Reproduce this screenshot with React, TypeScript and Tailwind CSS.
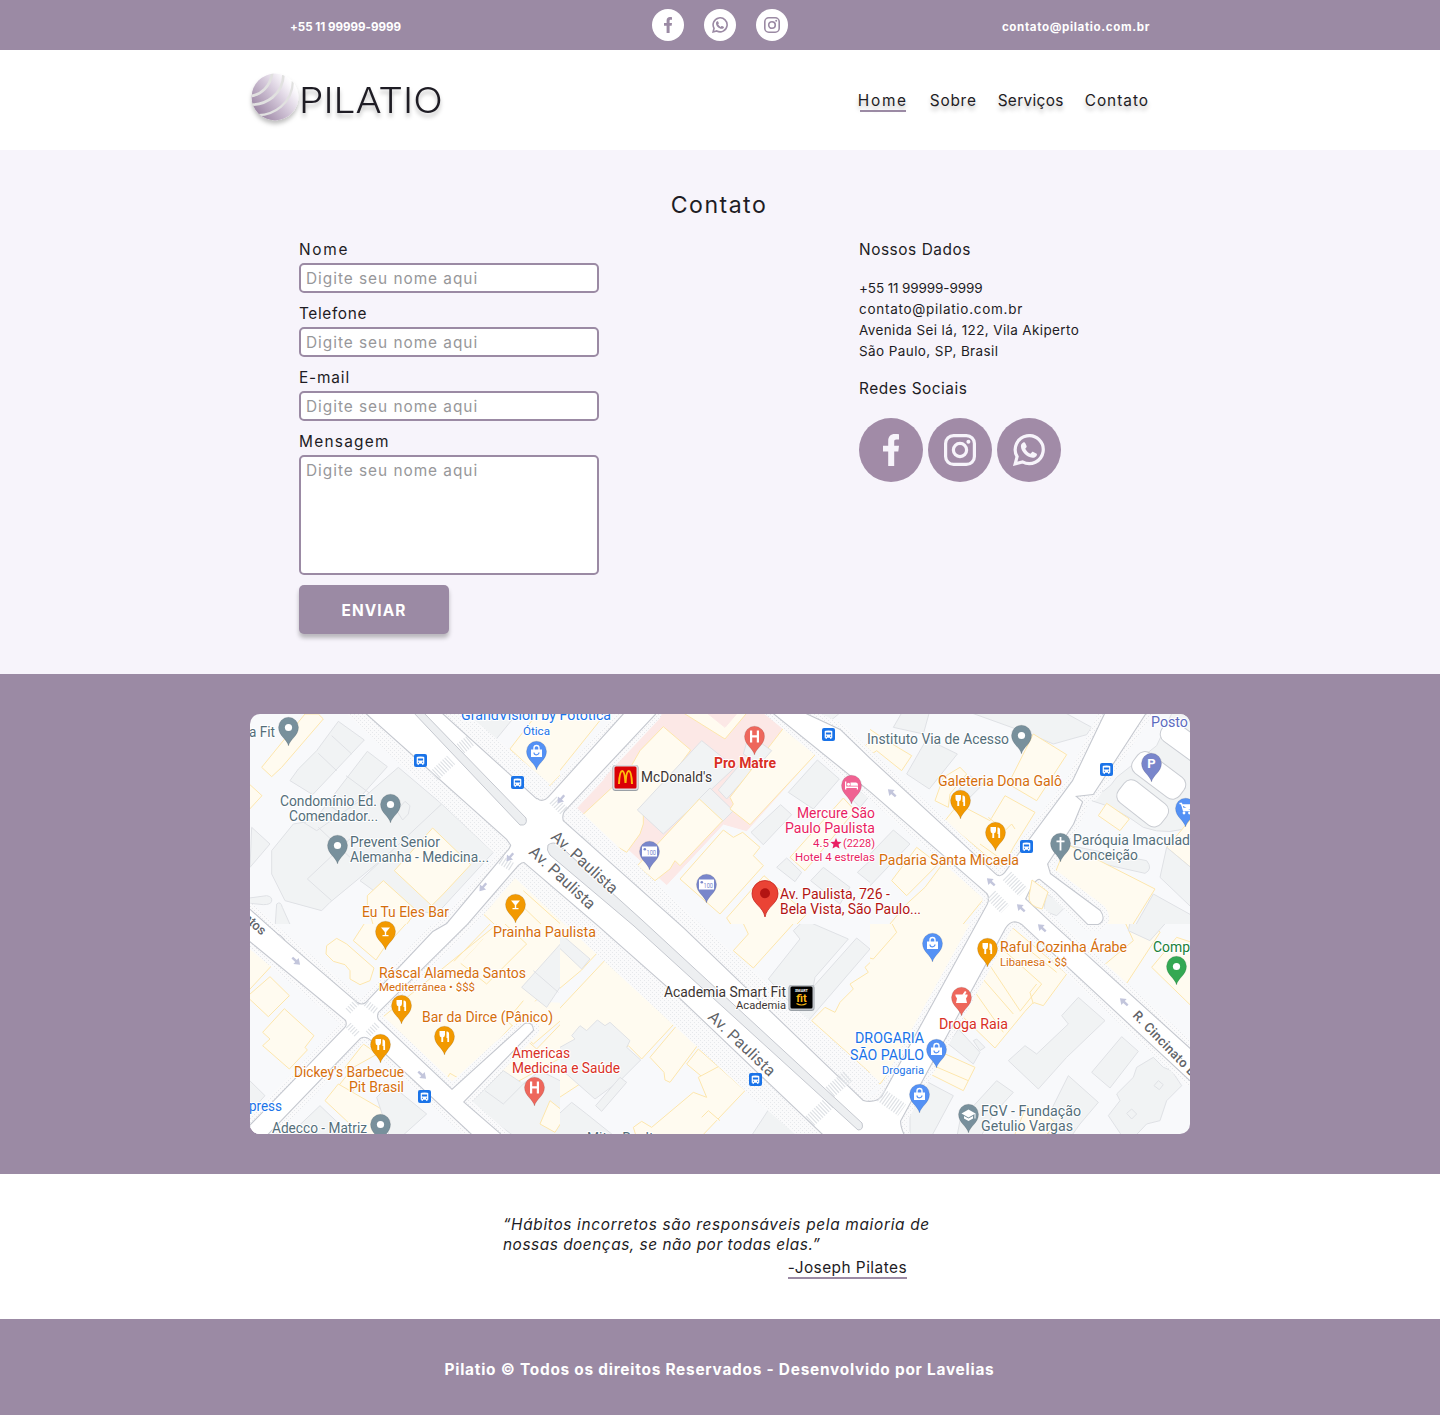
import type { ReactNode } from 'react';

/* ---------- social icons ---------- */

function FacebookIcon({ className }: { className: string }) {
  return (
    <svg viewBox="0 0 32 32" className={className} fill="currentColor">
      <path d="M24 .3V5.6h-2.6c-1.7 0-2.2.8-2.2 2.2V11.8H24l-.7 5.8h-4.1V32h-6V17.6H8v-5.8h5.2V7C13.200 2.600 15.800.1 19.700.1c1.800 0 3.300.1 4.300.2z" />
    </svg>
  );
}

function InstagramIcon({ className }: { className: string }) {
  return (
    <svg viewBox="0 0 32 32" className={className} fill="none" stroke="currentColor" strokeWidth="3.200">
      <rect x="1.600" y="1.600" width="28.800" height="28.800" rx="8" />
      <circle cx="16" cy="16" r="6.600" />
      <circle cx="24.400" cy="7.700" r="2" fill="currentColor" stroke="none" />
    </svg>
  );
}

function WhatsappIcon({ className }: { className: string }) {
  return (
    <svg viewBox="0 0 32 32" className={className}>
      <path
        d="M2.200 29.800 4.100 22.600A14 14 0 1 1 9.500 27.900Z"
        fill="none"
        stroke="currentColor"
        strokeWidth="3.200"
      />
      <path
        d="M10.200 8.600c.7-.5 1.600-.5 2 .3l1.400 3.100c.2.500.1 1-.3 1.400l-1.100 1.300c1.200 2.300 2.900 4 5.300 5.100l1.400-1.600c.4-.4.9-.6 1.400-.3l3 1.600c.6.3.8.8.6 1.400-.6 2-2.400 2.900-4.400 2.800-6-.6-11.400-5.900-11.600-11.400 0-1.600.9-2.900 2.300-3.700z"
        fill="currentColor"
      />
    </svg>
  );
}

function LogoBall() {
  return (
    <svg viewBox="0 0 54 62" className="h-[62px] w-[54px] shrink-0 overflow-visible">
      <defs>
        <linearGradient id="ball" x1="0.120" y1="0.850" x2="0.900" y2="0.220">
          <stop offset="0" stopColor="#9c86a4" />
          <stop offset="0.500" stopColor="#cfc2d5" />
          <stop offset="0.900" stopColor="#f8f5fa" />
          <stop offset="1" stopColor="#ffffff" />
        </linearGradient>
        <clipPath id="ballClip">
          <circle cx="25" cy="28" r="23.400" />
        </clipPath>
        <filter id="ballShadow" x="-20%" y="-20%" width="140%" height="150%">
          <feDropShadow dx="0" dy="3.500" stdDeviation="2" floodColor="#000" floodOpacity="0.250" />
        </filter>
      </defs>
      <g filter="url(#ballShadow)">
        <circle cx="25" cy="28" r="23.400" fill="url(#ball)" />
      </g>
      <g clipPath="url(#ballClip)" fill="none" stroke="#e1e1e0" strokeWidth="2.700">
        <path d="M0 27.200C11 26 20.500 18 22.700 2" />
        <path d="M0 35.800C16 36 33 26 33.500 5" />
        <path d="M6 46C24 47 42.500 34 42.900 12" strokeWidth="2.300" />
      </g>
    </svg>
  );
}

/* ---------- map ---------- */

const Y = 'fill-[#fffbf0] stroke-[#fde6ac]';
const G = 'fill-[#f1f3f4] stroke-[#dfe1e5]';
const P = 'fill-[#fce8e6] stroke-[#fce8e6]';

type Shape = [string, string];

/* Each tile is a piece of the map, drawn on a grid three times finer than the page. */
const tiles: { x: number; y: number; w: number; shapes: Shape[] }[] = [
  {
    x: 0,
    y: 0,
    w: 930,
    shapes: [
      [Y, 'M165 0 35 160 65 188 95 160 220 15 205 0Z'],
      [Y, 'M-9 204 36 245-9 294Z'],
      [G, 'M265 22 343 78 188 242 120 200 145 165 200 110Z'],
      [G, 'M245 65 305 120M205 118 260 170'],
      [G, 'M352 112 412 158 330 250 180 400 130 340 200 310Z'],
      [G, 'M288 185 362 240M225 265 290 310'],
      [G, 'M445 160 575 270 475 375 440 400 240 565 215 590 105 560 65 480 65 410 130 330 160 325 200 350 330 260Z'],
      [G, 'M172 495 310 365 355 400M172 495 245 560M205 340 300 430'],
      [G, 'M440 290 465 262 480 275 475 300 458 318Z'],
      [G, 'M5 340 60 390 0 460Z'],
      [G, 'M575 270 730 415 560 600 440 580 330 500Z'],
      [Y, 'M548 342 662 452 580 540 545 575 433 470Z'],
      [Y, 'M400 500 500 590 462 642H372L352 570 352 545Z'],
      [G, 'M-9 553 50 545Q68 548 65 562 62 572 40 572L-9 567Z'],
      [G, 'M75 642 80 570Q92 560 97 580L125 642Z'],
      [G, 'M630-12 735 80 810-12Z'],
      [Y, 'M870-12 780 105 900 215 990 120V-12Z'],
      [Y, 'M815 465 990 630V642H745L700 600Z'],
      [Y, 'M820 530 945 642M800 560 885 642'],
    ],
  },
  {
    x: 0,
    y: 210,
    w: 930,
    shapes: [
      [Y, 'M-9 60 65 125-9 205Z'],
      [Y, 'M60 158 118 215 55 278-9 218Z'],
      [Y, 'M103 254 192 335 165 370 172 378 118 435 38 365 60 345 38 325Z'],
      [Y, 'M230 65 260 43 290 60 372 132 360 170 330 182 300 165V140L285 122 250 112 228 90Z'],
      [Y, 'M350-12 310 50 378 108 400 75 478-12Z'],
      [Y, 'M757-12 385 290 590 465 620 480 990 90V-12Z'],
      [Y, 'M640 110 700 45 775 105 712 172Z'],
      [Y, 'M612 112 732-12M632 118 710 180 830 60 752-12'],
      [Y, 'M590 465 600 448 630 465M820 230 770 290 850 360 990 240'],
      [G, 'M990 20V100L890 250 815 190 940 50Z'],
      [G, 'M850 140 925 205'],
      [Y, 'M720 440 820 340 860 375 990 240V370L790 480Z'],
      [G, 'M660 540 760 440 820 480 870 440 990 500V642H800Z'],
      [G, 'M705 500 760 540 830 470'],
      [Y, 'M900 530 950 570 915 625 870 600Z'],
      [Y, 'M340 360 285 430 330 470 270 560 230 530 310 430 400 380 440 430Z'],
      [Y, 'M265 480 225 530 345 642H400L420 570Z'],
      [G, 'M380 520 420 480 530 570 450 642H420Z'],
      [G, 'M210 545 312 642H108Z'],
      [G, 'M-9 462 45 515-9 575Z'],
    ],
  },
  {
    x: 310,
    y: 0,
    w: 930,
    shapes: [
      [Y, 'M-9-12H145L-9 180Z'],
      [P, 'M290-12H640L770 115 560 350 490 330 320 512 210 410 50 285 130 200 220 60Z'],
      [Y, 'M310 38 392 108 250 300 250 330 240 360 200 415 150 385 120 350 65 305 200 180 240 110Z'],
      [G, 'M425 80 525 160 310 360 232 288Z'],
      [Y, 'M356-12 495 75 568-12Z'],
      [P, 'M430-12 495 40 540-12Z'],
      [G, 'M450 222 520 290 485 325 412 260Z'],
      [G, 'M545 145 575 170 500 255 475 228Z'],
      [Y, 'M680 30 772 115 570 332 510 285 520 270 510 250Z'],
      [G, 'M560 85 580 70 635 110 600 150 550 120Z'],
      [Y, 'M418 255 488 320 360 455 345 440 330 465 285 500 232 455Z'],
      [Y, 'M490 348 520 370 548 355 600 400 580 425 610 455 480 600 360 495Z'],
      [Y, 'M612 485 740 600 700 642H520L500 612Z'],
      [G, 'M772 138 838 195 760 285 685 235Z'],
      [G, 'M662 272 695 302 610 392 573 355Z'],
      [Y, 'M850 252 885 290 735 470 690 430Z'],
      [G, 'M890 225 925 250 900 280 870 250Z'],
      [G, 'M680 432 725 475 705 503 650 460Z'],
      [G, 'M790 460 870 520 840 570 752 500Z'],
      [G, 'M980 395 892 475 980 545Z'],
      [G, 'M60 375 80 350 105 370 85 400Z'],
      [G, 'M750-12H850L800 30Z'],
      [Y, 'M980 35 900 110 980 155Z'],
      [Y, 'M-9 562 45 610 30 642H-9Z'],
    ],
  },
  {
    x: 310,
    y: 210,
    w: 930,
    shapes: [
      [Y, 'M-9-12H5L118 80 90 110 65 138-9 200Z'],
      [G, 'M-9 20 90 105 65 135-9 65Z'],
      [Y, 'M145 98 353 288 245 405 205 365 60 480-9 525V262Z'],
      [G, 'M60 305 80 320 112 288 135 305 150 295 210 350 200 370 242 408 180 470 105 525-9 425V375L45 345 35 335Z'],
      [G, 'M180 460 200 475 125 562 107 545Z'],
      [Y, 'M360 293 422 352 330 475 315 468 312 445 270 400Z'],
      [Y, 'M415 375 475 428 440 470 380 420Z'],
      [Y, 'M475 428 555 500 420 642H230L220 610 245 592 275 610 400 505 440 520 415 460Z'],
      [Y, 'M425 580 445 560 480 590'],
      [G, 'M35 535 80 570 170 642H-9V575Z'],
      [G, 'M625 558 765 642H570Z'],
      [Y, 'M545-12H710L580 132 520 80 565 30Z'],
      [G, 'M733-12 865 45 765 160 740 290 625 165 720 45 700 20Z'],
      [G, 'M890 42 930 75 745 290 705 250Z'],
      [Y, 'M990 60 915 130 925 145 870 180 880 195 840 235 825 265 795 250 755 290 990 500Z'],
      [Y, 'M660 530 675 513 707 540 688 562Z'],
      [Y, 'M790 400 808 385 828 405 812 425Z'],
    ],
  },
  {
    x: 620,
    y: 0,
    w: 960,
    shapes: [
      [Y, 'M-9 40 50 80 125 125 95 170 20 110-9 130Z'],
      [G, 'M100-12H180L160 60 70 40Z'],
      [G, 'M170 75 262 120 178 225 110 180Z'],
      [G, 'M280-12H570L665 40 650 62 550 90 480 60Z'],
      [Y, 'M490 60 590 122 500 260 415 210Z'],
      [Y, 'M270 160 290 180 240 240 235 280 195 260 220 190Z'],
      [G, 'M300 185 340 210 290 260 260 235Z'],
      [Y, 'M405 245 495 295 430 400 400 460 355 430 225 320 265 270 360 320Z'],
      [Y, 'M355 310 405 350 425 330 435 345M330 390 400 440 375 460'],
      [G, 'M70 348 120 390-9 525V430Z'],
      [Y, 'M140 400 205 450 110 545 65 500Z'],
      [Y, 'M225 440 345 550 270 642H50L110 570 165 520Z'],
      [G, 'M650 250Q710 240 740 190L860 95 910-12H980V330Q900 370 820 340 740 280 665 260Z'],
      [Y, 'M710 268 778 315 750 350 685 305Z'],
      [Y, 'M745 105 760 82 775 92 757 118Z'],
      [Y, 'M980 295 890 400 980 475Z'],
      [G, 'M890 400 980 475V595L870 490Z'],
      [G, 'M600 395 830 440Q850 465 825 478L700 450 590 420Z'],
      [Y, 'M590 390 855 525 782 642H700L550 490Z'],
      [G, 'M530 540 590 575 560 605 520 590Z'],
      [G, 'M850 540 980 612V642H792Z'],
    ],
  },
  {
    x: 620,
    y: 210,
    w: 960,
    shapes: [
      [Y, 'M-9-12H320L130 350 30 480-9 455Z'],
      [Y, 'M60-12 80 25 10 105-9 100'],
      [Y, 'M400-12 590 150 520 245 490 235 465 262 375 372 270 270Z'],
      [Y, 'M380 60 515 180 450 262M350 110 450 260M330 155 430 270M305 190 400 325M480 80 560 145M490 240 480 205 500 180'],
      [G, 'M265 315 330 385 310 420 235 360Z'],
      [G, 'M310 350 320 345 345 370 330 380Z'],
      [Y, 'M215 385 315 430 280 500 180 450Z'],
      [Y, 'M190 425 295 470'],
      [G, 'M165 470 250 515 182 642H120V560Z'],
      [G, 'M625 220 705 290 590 400 505 495 415 410 465 365 500 390 595 300 575 275Z'],
      [G, 'M755 338 805 382 720 492 665 445Z'],
      [G, 'M595 455 685 535 630 600 600 642H545L510 590 545 555Z'],
      [G, 'M380 470 430 505 370 570 330 642H260L270 590Z'],
      [G, 'M850 400 880 430 905 440 935 485 890 530 870 590 830 600 790 642H760L715 575 750 530 740 510 790 460 800 430Z'],
      [G, 'M865 470 880 482 868 497 852 485ZM785 555 800 570 785 585 770 568Z'],
      [Y, 'M840-12H762L790 50 700 125 770 178 870 25Z'],
      [G, 'M782-12H895L840 50 775 20Z'],
      [Y, 'M920 40 845 130 960 242 980 225V60Z'],
      [Y, 'M470 545 500 570 515 560 560 600 520 642H430Z'],
    ],
  },
];

const sideStreets = [
  'M405 0H374L300 82Q293 90 287 85L262 127Q262 133 257 138L197 210 183 218 116 289Q112 292 107 289L30 223 0 196V227L96 306Q98 311 95 314L-5 417V430H8L110 324Q115 321 120 325L222 420 250 420 213 388 283 316Q282 308 275 310L202 376 128 306Q126 302 128 298L217 210 268 151Q275 144 285 152L315 115Q310 103 314 97Z',
  'M513 -20 590 16 620 45 745 160Q750 165 755 159L823 67 855 0H895L843 80 825 82 832 88 823 110 797 150 800 160 850 197 Q856 206 848 210L838 210 806 178 790 165Q785 163 775 185L802 210 940 335V366L772 210Q762 203 755 214L650 407Q650 415 656 425H610L613 387Q625 390 632 383L738 190Q741 182 736 178L620 77 500 -20Z',
];

const avenue =
  'M115 -2 190 -2 285 84 314 108 433 214 613 387 640 422H575L427 281 349 212 273 147 257 125Z';

const serviceLane = 'M-2 205 30 222 34 226 0 198Z';

function Roads() {
  const all = [...sideStreets, avenue, serviceLane];
  return (
    <g strokeLinejoin="round">
      <g fill="url(#dots)">
        <path d="M95 -2 243 138 257 147 262 120 115 -2ZM192 -2 215 -2 300 70 290 88ZM250 150 262 140 273 147 427 281 575 420 545 420 495 377 340 234Z" />
        <path d="M325 92 450 210 630 368 613 387 433 214 312 103Z" />
        <path d={sideStreets[0]} stroke="url(#dots)" strokeWidth="13" />
        <path d={sideStreets[1]} stroke="url(#dots)" strokeWidth="13" />
      </g>
      <g fill="none" stroke="#c5c8cf" strokeWidth="2.200">
        {all.map((d) => (
          <path key={d} d={d} />
        ))}
      </g>
      <g fill="#ffffff">
        {all.map((d) => (
          <path key={d} d={d} />
        ))}
      </g>

      {/* zebra crossings */}
      <g stroke="#dfe2e6" fill="none" strokeDasharray="1.200 1.600">
        <path d="M184 62 201 46" strokeWidth="12" />
        <path d="M204 40 221 26" strokeWidth="12" />
        <path d="M303 86 315 98" strokeWidth="10" />
        <path d="M251 146 262 153" strokeWidth="9" />
        <path d="M98 297 108 287M116 289 126 297M127 311 117 321M107 320 98 311" strokeWidth="7" />
        <path d="M741 181 755 195" strokeWidth="12" />
        <path d="M757 162 773 178" strokeWidth="12" />
        <path d="M631 381 652 396" strokeWidth="14" />
        <path d="M560 407 580 388M580 378 598 362" strokeWidth="13" />
      </g>

      {/* medians */}
      <g fill="#edeff1" stroke="#c5c8cf">
        <path d="M163 -2 173 -2 276 104Q278 112 270 111Z" />
        <path d="M298 131Q303 127 309 131L392 206 612 409Q614 416 608 416L384 212 300 141Q296 136 298 131Z" />
      </g>

      {/* parking bays */}
      <g fill="#ffffff" stroke="#c9ccd2">
        <rect x="866" y="76" width="54" height="27" rx="9" transform="rotate(38 893 89)" />
        <rect x="880" y="49" width="58" height="25" rx="9" transform="rotate(37 909 61)" />
        <rect x="908" y="19" width="64" height="23" rx="9" transform="rotate(36 938 30)" />
      </g>
      <path d="M782 166 798 178 792 195Q778 192 779 182Z" className={Y} />

      {/* traffic arrows */}
      <g fill="#c3c6dc">
        {[
          [311, 85, 130],
          [260, 143, 130],
          [233, 173, 130],
          [46, 247, 42],
          [172, 361, 42],
          [642, 79, 222],
          [741, 168, 222],
          [771, 194, 222],
          [792, 214, 222],
          [874, 288, 222],
        ].map(([x, y, r]) => (
          <path
            key={`${x}-${y}`}
            d="M-5-1.200H0V-4L5.500 0 0 4V1.200H-5Z"
            transform={`translate(${x} ${y}) rotate(${r})`}
          />
        ))}
      </g>
    </g>
  );
}

type Glyph =
  | 'dot' | 'bag' | 'cart' | 'fork' | 'drink' | 'H' | 'P' | 'bed' | 'cash' | 'cross' | 'cap' | 'mortar';

const SLATE = '#78909c';
const BLUE = '#5491f5';
const ORANGE = '#f29900';
const RED = '#ee675c';
const PURPLE = '#7986cb';

const pins: [number, number, string, Glyph][] = [
  [288, 727, SLATE, 'dot'],
  [390, 804, SLATE, 'dot'],
  [337, 845, SLATE, 'dot'],
  [1021, 735, SLATE, 'dot'],
  [380, 1124, SLATE, 'dot'],
  [1060, 843, SLATE, 'cross'],
  [968, 1114, SLATE, 'cap'],
  [536, 751, BLUE, 'bag'],
  [932, 943, BLUE, 'bag'],
  [936, 1049, BLUE, 'bag'],
  [919, 1094, BLUE, 'bag'],
  [1185, 808, BLUE, 'cart'],
  [515, 904, ORANGE, 'drink'],
  [385, 931, ORANGE, 'drink'],
  [401, 1005, ORANGE, 'fork'],
  [444, 1036, ORANGE, 'fork'],
  [380, 1044, ORANGE, 'fork'],
  [960, 800, ORANGE, 'fork'],
  [995, 832, ORANGE, 'fork'],
  [987, 948, ORANGE, 'fork'],
  [754, 736, RED, 'H'],
  [534, 1087, RED, 'H'],
  [961, 997, RED, 'mortar'],
  [851, 785, '#f06292', 'bed'],
  [649, 851, PURPLE, 'cash'],
  [706, 884, PURPLE, 'cash'],
  [1151, 763, PURPLE, 'P'],
  [1176, 966, '#34a853', 'dot'],
];

function PinGlyph({ kind }: { kind: Glyph }): ReactNode {
  switch (kind) {
    case 'dot':
      return <circle r="3.600" fill="#fff" />;
    case 'bag':
      return (
        <g>
          <path d="M-5.500-2H5.500V5.500H-5.500Z" fill="#fff" />
          <path d="M-2.500-1.500V-3.500A2.500 2.500 0 0 1 2.500-3.500V-1.500" fill="none" stroke="#fff" strokeWidth="1.400" />
          <path d="M-2.500 1A2.500 2.300 0 0 0 2.500 1" fill="none" stroke={BLUE} strokeWidth="1.200" />
        </g>
      );
    case 'cart':
      return (
        <g>
          <path d="M-6-5H-4L-2 2H5M-4-3.500H6L4.500 0H-3" fill="#fff" stroke="#fff" strokeWidth="1.300" />
          <circle cx="-1.500" cy="4.500" r="1.400" fill="#fff" />
          <circle cx="4" cy="4.500" r="1.400" fill="#fff" />
        </g>
      );
    case 'fork':
      return (
        <g fill="#fff">
          <path d="M-5-5.500H.500V-2Q.500.500-1.300.700V5.500H-3.200V.700Q-5 .500-5-2Z" />
          <path d="M2-5Q4.600-5.500 4.600-2V5.500H2.800V1.500H2Z" />
        </g>
      );
    case 'drink':
      return <path d="M-4.500-4H4.500L.700.500V3.500H3V4.800H-3V3.500H-.700V.500Z" fill="#fff" />;
    case 'H':
      return <path d="M-4.500-6H-2.300V-1.200H2.300V-6H4.500V6H2.300V1H-2.300V6H-4.500Z" fill="#fff" />;
    case 'P':
      return (
        <text y="4.800" textAnchor="middle" fontSize="13" fontWeight="700" fill="#fff">
          P
        </text>
      );
    case 'bed':
      return (
        <g fill="#fff">
          <path d="M-6.500-4H-5.200V1H6.500V4H5.300V2.500H-5.200V4H-6.500Z" />
          <circle cx="-3" cy="-1.300" r="1.500" />
          <path d="M-1-3H4.500Q6.500-3 6.500-.500V.300H-1Z" />
        </g>
      );
    case 'cash':
      return (
        <g>
          <rect x="-7.500" y="-5" width="15" height="10" fill="#fff" />
          <circle cx="-4.700" cy="-2.200" r="1.300" fill={PURPLE} />
          <text x="-3" y="3.600" textLength="9.500" lengthAdjust="spacingAndGlyphs" fontSize="6.500" fill={PURPLE}>
            100
          </text>
        </g>
      );
    case 'cross':
      return <path d="M-.900-6.500H.900V-3H4V-1.300H.900V7H-.900V-1.300H-4V-3H-.900Z" fill="#fff" />;
    case 'cap':
      return (
        <g fill="#fff">
          <path d="M-7-1 0-5 7-1 0 3Z" />
          <path d="M-4.500 1.500 0 4 4.500 1.500V4L0 6.500-4.500 4ZM6-1H7V4H6Z" />
        </g>
      );
    case 'mortar':
      return <path d="M-6-3H1L3.500-6.500 5-5.500 3.500-3H6V-1.500L4.500 1 5.500 5.500H-5.500L-4.500 1-6-1.500Z" fill="#fff" />;
  }
}

const SLATE_T = '#546e7a';
const ORANGE_T = '#d56e0c';
const BLUE_T = '#1a73e8';
const RED_T = '#d93025';
const PINK_T = '#e91e63';
const MAIN_T = '#b31412';
const DARK_T = '#3c3533';

/* text, left, right, baseline, colour, size */
const labels: [string, number, number, number, string, number][] = [
  ['a Fit', 249, 275, 737, SLATE_T, 14],
  ['Condomínio Ed.', 280, 377, 806, SLATE_T, 14],
  ['Comendador...', 289, 378, 821, SLATE_T, 14],
  ['Prevent Senior', 350, 440, 847, SLATE_T, 14],
  ['Alemanha - Medicina...', 350, 489, 862, SLATE_T, 14],
  ['Instituto Via de Acesso', 867, 1009, 744, SLATE_T, 14],
  ['Paróquia Imaculad', 1073, 1190, 845, SLATE_T, 14],
  ['Conceição', 1073, 1138, 860, SLATE_T, 14],
  ['Adecco - Matriz', 272, 367, 1133, SLATE_T, 14],
  ['FGV - Fundação', 981, 1081, 1116, SLATE_T, 14],
  ['Getulio Vargas', 981, 1073, 1131, SLATE_T, 14],
  ['Mitre Realty', 587, 660, 1143, SLATE_T, 14],
  ['GrandVision by Fototica', 461, 611, 720, BLUE_T, 14],
  ['Ótica', 523, 550, 735, BLUE_T, 11],
  ['press', 249, 282, 1111, BLUE_T, 14],
  ['DROGARIA', 855, 924, 1043, BLUE_T, 14],
  ['SÃO PAULO', 850, 924, 1060, BLUE_T, 14],
  ['Drogaria', 882, 924, 1074, BLUE_T, 11],
  ['Posto', 1151, 1188, 727, '#5c6bc0', 14],
  ["McDonald's", 641, 712, 782, DARK_T, 14],
  ['Academia Smart Fit', 664, 786, 997, DARK_T, 14],
  ['Academia', 736, 786, 1009, DARK_T, 11],
  ['Mercure São', 797, 875, 818, PINK_T, 14],
  ['Paulo Paulista', 785, 875, 833, PINK_T, 14],
  ['4.5', 813, 829, 847, PINK_T, 11.5],
  ['(2228)', 843, 875, 847, PINK_T, 11.5],
  ['Hotel 4 estrelas', 795, 875, 861, PINK_T, 11],
  ['Av. Paulista, 726 -', 780, 890, 899, MAIN_T, 14],
  ['Bela Vista, São Paulo...', 780, 921, 914, MAIN_T, 14],
  ['Galeteria Dona Galô', 938, 1062, 786, ORANGE_T, 14],
  ['Padaria Santa Micaela', 879, 1019, 865, ORANGE_T, 14],
  ['Raful Cozinha Árabe', 1000, 1127, 952, ORANGE_T, 14],
  ['Libanesa • $$', 1000, 1067, 966, ORANGE_T, 10.5],
  ['Eu Tu Eles Bar', 362, 449, 917, ORANGE_T, 14],
  ['Prainha Paulista', 493, 596, 937, ORANGE_T, 14],
  ['Ráscal Alameda Santos', 379, 526, 978, ORANGE_T, 14],
  ['Mediterrânea • $$$', 379, 475, 991, ORANGE_T, 11],
  ['Bar da Dirce (Pânico)', 422, 553, 1022, ORANGE_T, 14],
  ["Dickey's Barbecue", 294, 404, 1077, ORANGE_T, 14],
  ['Pit Brasil', 349, 404, 1092, ORANGE_T, 14],
  ['Americas', 512, 570, 1058, RED_T, 14],
  ['Medicina e Saúde', 512, 620, 1073, RED_T, 14],
  ['Droga Raia', 939, 1008, 1029, RED_T, 14],
  ['Comp', 1153, 1190, 952, '#188038', 14],
];

const busStops = [
  [420, 760],
  [517, 782],
  [828, 734],
  [1106, 769],
  [1026, 846],
  [755, 1079],
  [424, 1096],
];

function StreetMap() {
  return (
    <svg
      viewBox="250 714 940 420"
      className="block h-[420px] w-[940px] rounded-[10px] bg-[#f8f9fb] font-['Roboto',sans-serif]"
    >
      <defs>
        <pattern id="dots" width="4" height="4" patternUnits="userSpaceOnUse">
          <rect width="4" height="4" fill="#fafafb" />
          <rect width="1" height="1" x="0" y="0" fill="#e6e8eb" />
          <rect width="1" height="1" x="2" y="2" fill="#e6e8eb" />
        </pattern>
        <clipPath id="tile930">
          <rect width="930" height="630" />
        </clipPath>
        <clipPath id="tile960">
          <rect width="960" height="630" />
        </clipPath>
      </defs>

      <g transform="translate(250 714)">
        {tiles.map((t) => (
          <g
            key={`${t.x}-${t.y}`}
            transform={`translate(${t.x} ${t.y}) scale(0.33333)`}
            clipPath={`url(#tile${t.w})`}
            strokeWidth="3"
          >
            {t.shapes.map(([cls, d]) => (
              <path key={d} d={d} className={cls} />
            ))}
          </g>
        ))}
        <Roads />
      </g>

      {pins.map(([x, y, color, kind]) => (
        <g key={`${x}-${y}`} transform={`translate(${x + 0.5} ${y + 0.5})`}>
          <path
            d="M0 18.500C-1.500 11.500-10 8.500-10-.300A10 10 0 0 1 10-.300C10 8.500 1.500 11.500 0 18.500Z"
            fill={color}
            stroke="#00000022"
            strokeWidth="0.800"
          />
          <PinGlyph kind={kind} />
        </g>
      ))}

      <path
        d="M765 917C763 906 752 904 752 893.500A13 13 0 0 1 778 893.500C778 904 767 906 765 917Z"
        fill="#ea4335"
        stroke="#c5221f"
        strokeWidth="0.800"
      />
      <circle cx="765" cy="893.300" r="5" fill="#b31412" />

      {busStops.map(([x, y]) => (
        <g key={`${x}-${y}`} transform={`translate(${x + 0.5} ${y + 0.5})`}>
          <rect x="-6.500" y="-6.500" width="13" height="13" rx="2" fill="#1a73e8" />
          <path d="M-3.800-3Q-3.800-4 0-4T3.800-3V3.200H3V4.300H1.500V3.200H-1.500V4.300H-3V3.200H-3.800Z" fill="#fff" />
          <path d="M-2.600-2H2.600V0H-2.600ZM-2.600 1.300H-1.500V2.300H-2.600ZM1.500 1.300H2.600V2.300H1.500Z" fill="#1a73e8" />
        </g>
      ))}

      <rect x="612.500" y="765" width="26" height="26" rx="3" fill="#9aa0a6" />
      <rect x="613" y="765" width="25" height="25" rx="2.500" fill="#dadce0" />
      <rect x="614.500" y="766.500" width="22" height="22" rx="1.500" fill="#da0005" />
      <path
        d="M619 784C619.300 776 620.500 771 622.300 771 624.300 771 625 776 625.500 783 626 776 626.700 771 628.700 771 630.500 771 631.700 776 632 784"
        fill="none"
        stroke="#ffbc0d"
        strokeWidth="2"
      />

      <rect x="788.500" y="985" width="26" height="26" rx="3" fill="#9aa0a6" />
      <rect x="789" y="985" width="25" height="25" rx="2.500" fill="#bdc1c6" />
      <rect x="790.500" y="986.500" width="22" height="22" rx="1.500" fill="#000" />
      <text x="801.500" y="992" textAnchor="middle" fontSize="3.800" fontWeight="700" fill="#fff">
        SMART
      </text>
      <text x="801.500" y="1002" textAnchor="middle" fontSize="11" fontWeight="700" fill="#fdb913">
        fit
      </text>
      <path d="M796.500 1003.500Q801.500 1006.500 806.500 1003.500" fill="none" stroke="#fdb913" strokeWidth="1.200" />

      <path
        d="m836 838 1.600 3.700 4 .300-3.100 2.600 1 3.900-3.500-2.100-3.500 2.100 1-3.900-3.100-2.600 4-.300z"
        fill={PINK_T}
      />

      <g stroke="#fff" strokeWidth="2" strokeLinejoin="round" paintOrder="stroke">
        {labels.map(([t, x1, x2, y, color, size]) => (
          <text
            key={`${t}-${y}`}
            x={x1}
            y={y}
            fontSize={size}
            fill={color}
            textLength={x2 - x1}
            lengthAdjust="spacingAndGlyphs"
          >
            {t}
          </text>
        ))}
        <text x="714" y="768" fontSize="14" fontWeight="700" fill={RED_T} textLength="62">
          Pro Matre
        </text>
      </g>

      <g stroke="#fff" strokeWidth="2" paintOrder="stroke" fill="#5f6368" fontSize="16">
        <text transform="translate(550 838) rotate(42.500)" textLength="84">
          Av. Paulista
        </text>
        <text transform="translate(528 853) rotate(43)" textLength="84">
          Av. Paulista
        </text>
        <text transform="translate(707 1018) rotate(43.500)" textLength="86">
          Av. Paulista
        </text>
        <text transform="translate(1132 1016) rotate(46)" fontSize="13" fontWeight="500" textLength="112">
          R. Cincinato Braga
        </text>
        <text transform="translate(205 885) rotate(42)" fontSize="13" fontWeight="500" textLength="76">
          Alam. Santos
        </text>
      </g>
    </svg>
  );
}

/* ---------- page ---------- */

function Field({ label, tracking, children }: { label: string; tracking: string; children: ReactNode }) {
  return (
    <label className="flex flex-col">
      <span className={`h-[27px] text-[15.4px] leading-7 ${tracking}`}>{label}</span>
      {children}
    </label>
  );
}

const inputClass =
  'block w-full rounded-[5px] border-2 border-[#9b8aa4] bg-white px-[5px] text-[15.4px] tracking-[0.063em] placeholder:text-[#97979a] outline-none';

const navShadow = '[text-shadow:0_4px_4px_rgba(0,0,0,0.25)]';

export default function App() {
  return (
    <div className="w-[1440px] bg-white font-['Inter',sans-serif] text-[#1e1c24]">
      <div className="h-[50px] bg-[#9b8aa4] text-white">
        <div className="mx-auto grid h-full w-[860px] grid-cols-3 items-center text-[11.6px] font-bold leading-4">
          <span className="pt-1 tracking-[-0.002em]">+55 11 99999-9999</span>
          <div className="flex justify-center gap-5 text-[#9b8aa4]">
            <a className="flex size-8 items-center justify-center rounded-full bg-white">
              <FacebookIcon className="size-4" />
            </a>
            <a className="flex size-8 items-center justify-center rounded-full bg-white">
              <WhatsappIcon className="size-4" />
            </a>
            <a className="flex size-8 items-center justify-center rounded-full bg-white">
              <InstagramIcon className="size-4" />
            </a>
          </div>
          <span className="pt-1 text-right tracking-[0.054em]">contato@pilatio.com.br</span>
        </div>
      </div>

      <header className="mx-auto flex h-[100px] w-[940px] items-center justify-between pr-[41px]">
        <div className="flex items-center">
          <LogoBall />
          <span
            className={`-ml-[5px] inline-block origin-left scale-x-[1.11] text-[35px] font-light leading-none ${navShadow}`}
          >
            PILATIO
          </span>
        </div>
        <nav className={`flex gap-[21px] pt-[2px] text-[15.4px] leading-5 ${navShadow}`}>
          <a className="relative mr-px tracking-[0.11em] after:absolute after:-bottom-px after:left-[2px] after:h-[2px] after:w-[46px] after:bg-[#9b8aa4]">
            Home
          </a>
          <a className="tracking-[0.05em]">Sobre</a>
          <a className="tracking-[0.021em]">Serviços</a>
          <a className="tracking-[0.064em]">Contato</a>
        </nav>
      </header>

      <main className="h-[524px] bg-[#f7f4fb] pt-[37px]">
        <h1 className="pr-[2px] text-center text-[23.1px] leading-9 tracking-[0.064em]">Contato</h1>
        <div className="mx-auto mt-[13px] flex w-[842px] justify-between">
          <form className="flex w-[300px] flex-col gap-[7px]">
            <Field label="Nome" tracking="tracking-[0.11em]">
              <input className={`${inputClass} h-[30px]`} placeholder="Digite seu nome aqui" />
            </Field>
            <Field label="Telefone" tracking="tracking-[0.041em]">
              <input className={`${inputClass} h-[30px]`} placeholder="Digite seu nome aqui" />
            </Field>
            <Field label="E-mail" tracking="tracking-[0.055em]">
              <input className={`${inputClass} h-[30px]`} placeholder="Digite seu nome aqui" />
            </Field>
            <Field label="Mensagem" tracking="tracking-[0.082em]">
              <textarea
                className={`${inputClass} h-[120px] resize-none leading-7`}
                placeholder="Digite seu nome aqui"
              />
            </Field>
            <button
              type="button"
              className="mt-[3px] h-[49px] w-[150px] rounded-[5px] bg-[#9b8aa4] pt-[2px] text-[15.4px] font-bold tracking-[0.07em] text-white shadow-[0_4px_4px_rgba(0,0,0,0.25)]"
            >
              ENVIAR
            </button>
          </form>

          <aside className="w-[282px]">
            <h2 className="text-[15.4px] leading-7 tracking-[0.036em]">Nossos Dados</h2>
            <div className="mt-[14px] flex flex-col text-[13.5px] leading-[21px]">
              <span className="tracking-[-0.009em]">+55 11 99999-9999</span>
              <span className="tracking-[0.053em]">contato@pilatio.com.br</span>
              <span className="tracking-[0.028em]">Avenida Sei lá, 122, Vila Akiperto</span>
              <span className="tracking-[0.03em]">São Paulo, SP, Brasil</span>
            </div>
            <h2 className="mt-[13px] text-[15.4px] leading-7 tracking-[0.034em]">Redes Sociais</h2>
            <div className="mt-[15px] flex gap-[5px] text-[#f7f4fb]">
              <a className="flex size-16 items-center justify-center rounded-full bg-[#a18ba7]">
                <FacebookIcon className="size-8" />
              </a>
              <a className="flex size-16 items-center justify-center rounded-full bg-[#a18ba7]">
                <InstagramIcon className="size-8" />
              </a>
              <a className="flex size-16 items-center justify-center rounded-full bg-[#a18ba7]">
                <WhatsappIcon className="size-8" />
              </a>
            </div>
          </aside>
        </div>
      </main>

      <section className="flex h-[500px] items-center justify-center bg-[#9b8aa4]">
        <StreetMap />
      </section>

      <section className="h-[145px] pt-[41px]">
        <blockquote className="mx-auto w-[434px] text-[15.4px] leading-5">
          <p className="whitespace-nowrap italic tracking-[0.044em]">
            “Hábitos incorretos são responsáveis pela maioria de
          </p>
          <p className="whitespace-nowrap italic tracking-[0.034em]">nossas doenças, se não por todas elas.”</p>
          <footer className="mt-[3px] flex justify-end pr-[30px]">
            <cite className="h-[21px] whitespace-nowrap border-b-2 border-[#9b8aa4] not-italic tracking-[0.03em]">
              -Joseph Pilates
            </cite>
          </footer>
        </blockquote>
      </section>

      <footer className="flex h-24 items-center justify-center bg-[#9b8aa4] pt-[5px] pr-px text-[15.4px] font-bold leading-5 tracking-[0.049em] text-white">
        Pilatio © Todos os direitos Reservados - Desenvolvido por Lavelias
      </footer>
    </div>
  );
}
